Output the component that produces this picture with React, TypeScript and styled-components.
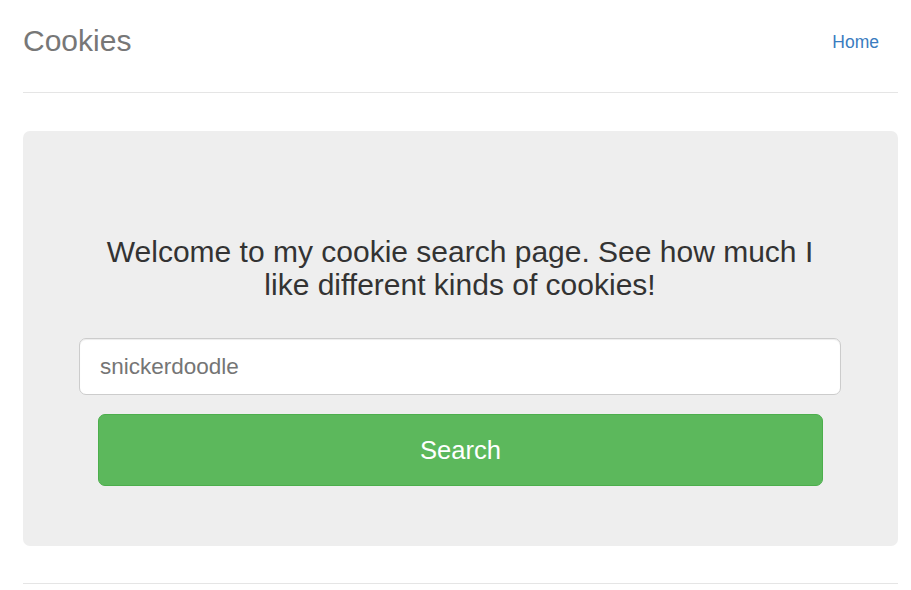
import React from "react";
import styled, { createGlobalStyle } from "styled-components";

const Global = createGlobalStyle`
  html, body { margin: 0; padding: 0; background: #fff; }
  body { font-family: "Liberation Sans", Arial, Helvetica, sans-serif; color: #333; }
  * { box-sizing: border-box; }
`;

const Page = styled.div`
  padding: 15px 13px 0 23px;
`;

const Header = styled.header`
  display: flex;
  justify-content: space-between;
  align-items: center;
  padding-bottom: 25px;
  border-bottom: 1px solid #e5e5e5;
`;

const Brand = styled.h3`
  margin: 0;
  font-size: 30px;
  font-weight: 400;
  line-height: 50px;
  color: #777;
`;

const Nav = styled.nav`
  display: flex;
`;

const NavLink = styled.a`
  display: block;
  padding: 12.5px 19px;
  font-size: 17.5px;
  line-height: 25px;
  color: #3a7cc0;
  text-decoration: none;
  margin-top: 2px;
`;

const Jumbotron = styled.section`
  margin-top: 38px;
  background: #eee;
  border-radius: 7px;
  padding: 104px 57px 60px 56px;
  text-align: center;
`;

const Lead = styled.h3`
  margin: 0 auto;
  max-width: 730px;
  font-size: 30px;
  font-weight: 400;
  line-height: 33px;
  color: #333;
`;

const Form = styled.form`
  margin-top: 37px;
  display: flex;
  flex-direction: column;
  align-items: stretch;
  gap: 19px;
`;

const Input = styled.input`
  display: block;
  width: 100%;
  height: 57px;
  padding: 12px 20px;
  font-family: inherit;
  font-size: 22.5px;
  color: #757575;
  background: #fff;
  border: 1px solid #ccc;
  border-radius: 7px;
  box-shadow: inset 0 1px 1px rgba(0, 0, 0, 0.075);
  outline: none;
`;

const Button = styled.button`
  display: block;
  margin: 0 18px 0 19px;
  height: 72px;
  font-family: inherit;
  font-size: 25.6px;
  color: #fff;
  background: #5cb85c;
  border: 1px solid #4cae4c;
  border-radius: 7px;
  cursor: pointer;
`;

const Footer = styled.footer`
  margin-top: 37px;
  border-top: 1px solid #e5e5e5;
  height: 20px;
`;

export default function App() {
  return (
    <>
      <Global />
      <Page>
        <Header>
          <Brand>Cookies</Brand>
          <Nav>
            <NavLink href="#">Home</NavLink>
          </Nav>
        </Header>
        <Jumbotron>
          <Lead>
            Welcome to my cookie search page. See how much I like different kinds of cookies!
          </Lead>
          <Form onSubmit={(e) => e.preventDefault()}>
            <Input type="text" defaultValue="snickerdoodle" />
            <Button type="submit">Search</Button>
          </Form>
        </Jumbotron>
        <Footer />
      </Page>
    </>
  );
}
